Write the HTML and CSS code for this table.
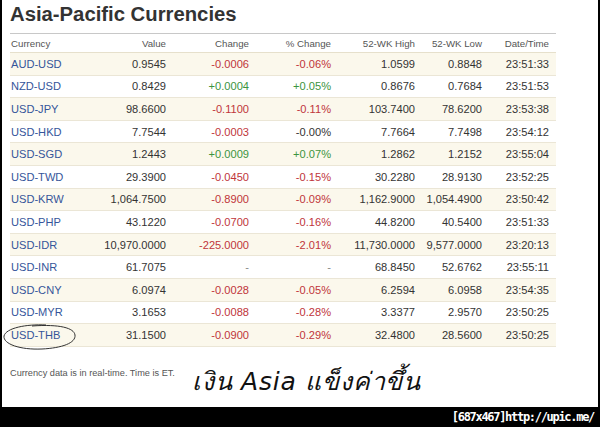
FILE: index.html
```html
<!DOCTYPE html>
<html lang="en">
<head>
<meta charset="utf-8">
<title>Asia-Pacific Currencies</title>
<link rel="stylesheet" href="styles.css">
</head>
<body>
<div class="frame">
  <h1 class="title">Asia-Pacific Currencies</h1>
  <table class="fx">
    <colgroup>
      <col class="c1"><col class="c2"><col class="c3"><col class="c4"><col class="c5"><col class="c6"><col class="c7">
    </colgroup>
    <thead>
      <tr><th class="l">Currency</th><th>Value</th><th>Change</th><th>% Change</th><th>52-WK High</th><th>52-WK Low</th><th>Date/Time</th></tr>
    </thead>
    <tbody>
      <tr class="alt"><td class="l"><a class="pair">AUD-USD</a></td><td>0.9545</td><td class="neg">-0.0006</td><td class="neg">-0.06%</td><td>1.0599</td><td>0.8848</td><td>23:51:33</td></tr>
      <tr><td class="l"><a class="pair">NZD-USD</a></td><td>0.8429</td><td class="pos">+0.0004</td><td class="pos">+0.05%</td><td>0.8676</td><td>0.7684</td><td>23:51:53</td></tr>
      <tr class="alt"><td class="l"><a class="pair">USD-JPY</a></td><td>98.6600</td><td class="neg">-0.1100</td><td class="neg">-0.11%</td><td>103.7400</td><td>78.6200</td><td>23:53:38</td></tr>
      <tr><td class="l"><a class="pair">USD-HKD</a></td><td>7.7544</td><td class="neg">-0.0003</td><td>-0.00%</td><td>7.7664</td><td>7.7498</td><td>23:54:12</td></tr>
      <tr class="alt"><td class="l"><a class="pair">USD-SGD</a></td><td>1.2443</td><td class="pos">+0.0009</td><td class="pos">+0.07%</td><td>1.2862</td><td>1.2152</td><td>23:55:04</td></tr>
      <tr><td class="l"><a class="pair">USD-TWD</a></td><td>29.3900</td><td class="neg">-0.0450</td><td class="neg">-0.15%</td><td>30.2280</td><td>28.9130</td><td>23:52:25</td></tr>
      <tr class="alt"><td class="l"><a class="pair">USD-KRW</a></td><td>1,064.7500</td><td class="neg">-0.8900</td><td class="neg">-0.09%</td><td>1,162.9000</td><td>1,054.4900</td><td>23:50:42</td></tr>
      <tr><td class="l"><a class="pair">USD-PHP</a></td><td>43.1220</td><td class="neg">-0.0700</td><td class="neg">-0.16%</td><td>44.8200</td><td>40.5400</td><td>23:51:33</td></tr>
      <tr class="alt"><td class="l"><a class="pair">USD-IDR</a></td><td>10,970.0000</td><td class="neg">-225.0000</td><td class="neg">-2.01%</td><td>11,730.0000</td><td>9,577.0000</td><td>23:20:13</td></tr>
      <tr><td class="l"><a class="pair">USD-INR</a></td><td>61.7075</td><td class="nil">-</td><td class="nil">-</td><td>68.8450</td><td>52.6762</td><td>23:55:11</td></tr>
      <tr class="alt"><td class="l"><a class="pair">USD-CNY</a></td><td>6.0974</td><td class="neg">-0.0028</td><td class="neg">-0.05%</td><td>6.2594</td><td>6.0958</td><td>23:54:35</td></tr>
      <tr><td class="l"><a class="pair">USD-MYR</a></td><td>3.1653</td><td class="neg">-0.0088</td><td class="neg">-0.28%</td><td>3.3377</td><td>2.9570</td><td>23:50:25</td></tr>
      <tr class="alt"><td class="l"><a class="pair">USD-THB</a></td><td>31.1500</td><td class="neg">-0.0900</td><td class="neg">-0.29%</td><td>32.4800</td><td>28.5600</td><td>23:50:25</td></tr>
    </tbody>
  </table>
  <div class="notes">
    <p class="foot">Currency data is in real-time. Time is ET.</p>
    <p class="thai">เงิน Asia แข็งค่าขึ้น</p>
  </div>
  <svg class="ring" width="78" height="34" viewBox="0 0 78 34" aria-hidden="true">
    <path d="M44 6 C24 5 4 9 2 17 C1 25 18 31 40 30 C60 29 74 24 73 16 C72 9 58 5 30 7" fill="none" stroke="#333" stroke-width="1"/>
  </svg>
</div>
<div class="bar">[687x467]http://upic.me/</div>
</body>
</html>
```
FILE: styles.css
```css
html, body {
  margin: 0;
  padding: 0;
  background: #000;
}
.frame {
  position: relative;
  box-sizing: border-box;
  margin-left: 2px;
  width: 596px;
  height: 407px;
  background: #fff;
  padding: 3px 0 0 8px;
  font-family: "Liberation Sans", Arial, sans-serif;
}
.title {
  margin: 0 0 7px 0;
  font-size: 20.3px;
  line-height: 23px;
  font-weight: bold;
  color: #333;
}
.fx {
  width: 546px;
  border-collapse: collapse;
  table-layout: fixed;
  border-top: 1px solid #c8c8c8;
}
.c1 { width: 90px; }
.c2 { width: 72px; }
.c3 { width: 83px; }
.c4 { width: 82px; }
.c5 { width: 84px; }
.c6 { width: 67px; }
.c7 { width: 68px; }
.fx th {
  height: 18px;
  padding: 0 6px 0 0;
  font-size: 9.7px;
  font-weight: normal;
  color: #555;
  text-align: right;
  border-bottom: 1px solid #e6e0cc;
  white-space: nowrap;
}
.fx td {
  height: 21.6px;
  padding: 0 6px 0 0;
  font-size: 11.1px;
  color: #333;
  text-align: right;
  border-bottom: 1px solid #ebe6d6;
  white-space: nowrap;
}
.fx td:last-child, .fx th:last-child { padding-right: 7px; }
.fx .l { text-align: left; padding-left: 1px; }
.fx tr.alt td { background: #fbf8ec; }
.pair { color: #35559a; text-decoration: none; }
.fx td.pos { color: #3b9440; }
.fx td.neg { color: #c0353a; }
.fx td.nil { color: #888; }
.notes {
  display: flex;
  align-items: flex-start;
  margin-top: 12px;
}
.foot {
  margin: 9px 0 0 0;
  font-size: 9.2px;
  color: #555;
  line-height: 11px;
}
.thai {
  margin: 5px 0 0 17px;
  font-family: "DejaVu Sans", sans-serif;
  font-style: italic;
  font-size: 25px;
  letter-spacing: 0.8px;
  line-height: 36px;
  color: #111;
}
.ring {
  position: absolute;
  left: 0;
  top: 319px;
}
.bar {
  height: 20px;
  box-sizing: border-box;
  padding-right: 6px;
  text-align: right;
  color: #fff;
  font-family: "DejaVu Sans Mono", monospace;
  font-weight: bold;
  font-size: 12px;
  line-height: 20px;
  letter-spacing: -1.3px;
}
```
